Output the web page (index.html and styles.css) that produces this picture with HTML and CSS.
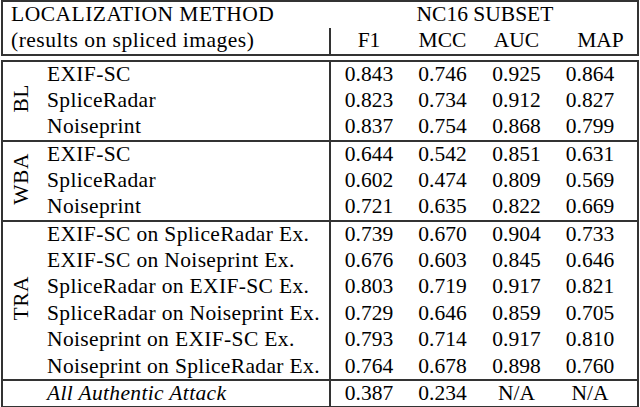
FILE: index.html
```html
<!DOCTYPE html>
<html lang="en">
<head>
    <meta charset="UTF-8">
    <meta name="viewport" content="width=device-width, initial-scale=1.0">
    <title>Localization results</title>
    <link rel="stylesheet" href="styles.css">
</head>
<body>
    <div class="results">
        <table class="head">
            <colgroup>
                <col class="col-group">
                <col class="col-method">
                <col class="col-metric">
                <col class="col-metric">
                <col class="col-metric">
                <col class="col-last">
            </colgroup>
            <tr>
                <th colspan="2" class="title">LOCALIZATION METHOD</th>
                <th colspan="4" class="subset">NC16 SUBSET</th>
            </tr>
            <tr>
                <th colspan="2" class="title">(results on spliced images)</th>
                <th class="first">F1</th>
                <th>MCC</th>
                <th>AUC</th>
                <th class="last">MAP</th>
            </tr>
        </table>

        <table class="body">
            <colgroup>
                <col class="col-group">
                <col class="col-method">
                <col class="col-metric">
                <col class="col-metric">
                <col class="col-metric">
                <col class="col-last">
            </colgroup>
            <tbody>
                <tr>
                    <td rowspan="3" class="group"><span>BL</span></td>
                    <td class="method">EXIF-SC</td>
                    <td class="first">0.843</td><td>0.746</td><td>0.925</td><td class="last">0.864</td>
                </tr>
                <tr>
                    <td class="method">SpliceRadar</td>
                    <td class="first">0.823</td><td>0.734</td><td>0.912</td><td class="last">0.827</td>
                </tr>
                <tr>
                    <td class="method">Noiseprint</td>
                    <td class="first">0.837</td><td>0.754</td><td>0.868</td><td class="last">0.799</td>
                </tr>
            </tbody>
            <tbody>
                <tr>
                    <td rowspan="3" class="group"><span>WBA</span></td>
                    <td class="method">EXIF-SC</td>
                    <td class="first">0.644</td><td>0.542</td><td>0.851</td><td class="last">0.631</td>
                </tr>
                <tr>
                    <td class="method">SpliceRadar</td>
                    <td class="first">0.602</td><td>0.474</td><td>0.809</td><td class="last">0.569</td>
                </tr>
                <tr>
                    <td class="method">Noiseprint</td>
                    <td class="first">0.721</td><td>0.635</td><td>0.822</td><td class="last">0.669</td>
                </tr>
            </tbody>
            <tbody>
                <tr>
                    <td rowspan="6" class="group"><span>TRA</span></td>
                    <td class="method">EXIF-SC on SpliceRadar Ex.</td>
                    <td class="first">0.739</td><td>0.670</td><td>0.904</td><td class="last">0.733</td>
                </tr>
                <tr>
                    <td class="method">EXIF-SC on Noiseprint Ex.</td>
                    <td class="first">0.676</td><td>0.603</td><td>0.845</td><td class="last">0.646</td>
                </tr>
                <tr>
                    <td class="method">SpliceRadar on EXIF-SC Ex.</td>
                    <td class="first">0.803</td><td>0.719</td><td>0.917</td><td class="last">0.821</td>
                </tr>
                <tr>
                    <td class="method">SpliceRadar on Noiseprint Ex.</td>
                    <td class="first">0.729</td><td>0.646</td><td>0.859</td><td class="last">0.705</td>
                </tr>
                <tr>
                    <td class="method">Noiseprint on EXIF-SC Ex.</td>
                    <td class="first">0.793</td><td>0.714</td><td>0.917</td><td class="last">0.810</td>
                </tr>
                <tr>
                    <td class="method">Noiseprint on SpliceRadar Ex.</td>
                    <td class="first">0.764</td><td>0.678</td><td>0.898</td><td class="last">0.760</td>
                </tr>
            </tbody>
            <tbody>
                <tr>
                    <td class="group"></td>
                    <td class="method attack">All Authentic Attack</td>
                    <td class="first">0.387</td><td>0.234</td><td>N/A</td><td class="last">N/A</td>
                </tr>
            </tbody>
        </table>
    </div>
</body>
</html>
```

FILE: styles.css
```css
* {
    margin: 0;
    padding: 0;
    box-sizing: border-box;
}

body {
    font-family: "Liberation Serif", "Times New Roman", serif;
    background-color: #fff;
    color: #000;
}

.results {
    width: 638px;
    margin-left: 1px;
}

table {
    width: 100%;
    table-layout: fixed;
    border-collapse: collapse;
    border: 2px solid #333;
    font-size: 21.5px;
}

.col-group {
    width: 38px;
}

.col-method {
    width: 290px;
}

.col-metric {
    width: 74px;
}

th,
td {
    font-weight: normal;
    text-align: center;
    white-space: nowrap;
    line-height: 1;
    padding-left: 3px;
}

/* Naglowek tabeli */
.head {
    margin-bottom: 4px;
}

.head th {
    height: 27px;
}

.head th.title {
    text-align: left;
    padding-left: 8px;
    letter-spacing: 0.5px;
}

.head th.last {
    padding-left: 12px;
}

.first {
    border-left: 2px solid #333;
}

/* Wiersze z wynikami */
.body td {
    height: 26.6px;
}

.body td.last {
    padding-right: 12px;
}

.body tbody + tbody tr:first-child td {
    border-top: 2px solid #333;
}

.body td.method {
    text-align: left;
    padding-left: 7px;
    letter-spacing: 0.35px;
}

.body td.attack {
    font-style: italic;
}

.body td.group {
    padding-left: 0;
}

.group span {
    display: inline-block;
    writing-mode: vertical-rl;
    transform: rotate(180deg);
    letter-spacing: 0.5px;
}
```
